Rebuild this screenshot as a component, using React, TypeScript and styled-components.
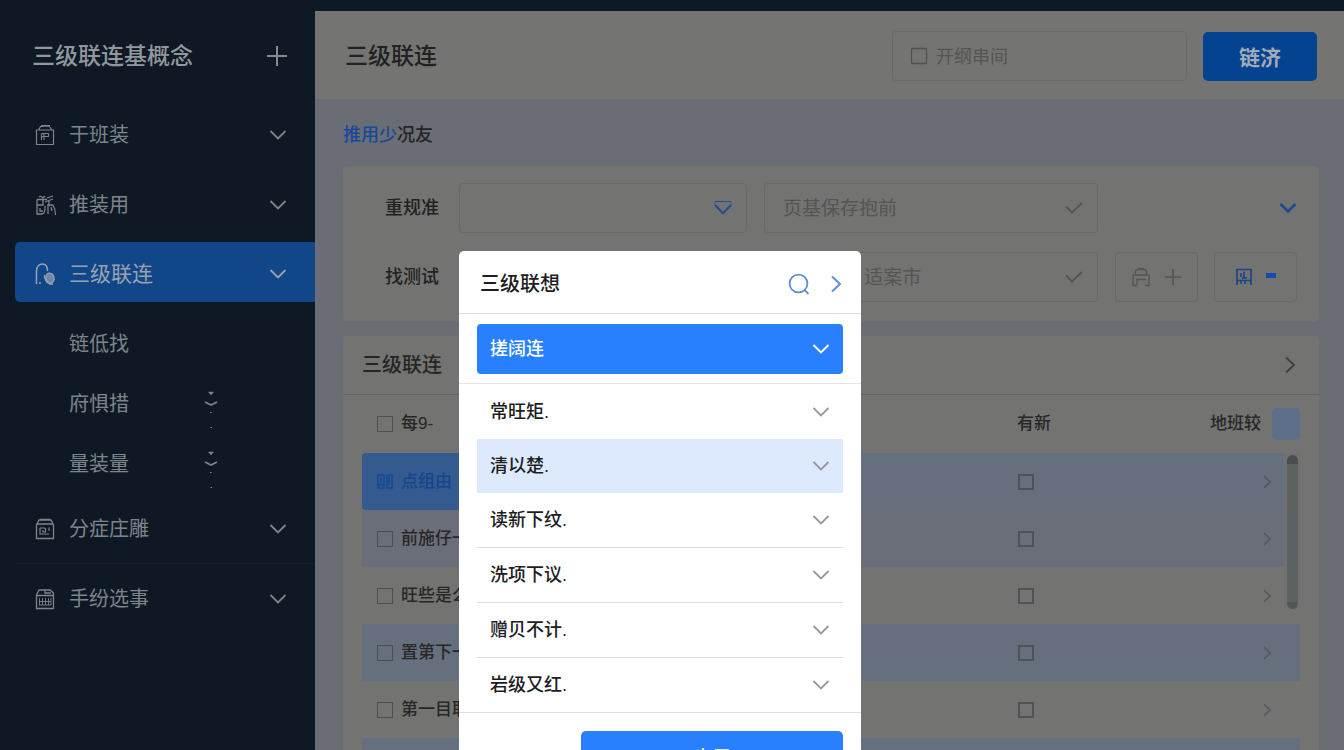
import React from "react";
import styled, { createGlobalStyle, css } from "styled-components";

const GlobalStyle = createGlobalStyle`
  *, *::before, *::after { box-sizing: border-box; }
  html, body { margin: 0; overflow: hidden; }
  body { background: #0e1925; }
  body, button, input, select {
    font-family: "Liberation Sans", "Noto Sans CJK SC", sans-serif;
  }
  button { margin: 0; padding: 0; border: 0; background: none; color: inherit; cursor: pointer; }
  h1, h2, p, ul { margin: 0; padding: 0; }
  ul { list-style: none; }
`;

/* ---------- shell ---------- */

const Shell = styled.div`
  display: flex;
  height: 100vh;
  overflow: hidden;
`;

const Sidebar = styled.nav`
  flex: 0 0 315px;
  padding: 12px 0 0 15px;
  background: #0e1925;
  color: #7f848c;
`;

const Brand = styled.div`
  display: flex;
  align-items: center;
  justify-content: space-between;
  height: 87px;
  padding: 0 27px 0 17px;
  color: #92979d;
`;

const BrandTitle = styled.h1`
  font-size: 23px;
  line-height: 32px;
  font-weight: 500;
`;

const IconButton = styled.button`
  display: flex;
  align-items: center;
`;

const NavItem = styled.button<{ $active?: boolean; $ruled?: boolean }>`
  display: flex;
  align-items: center;
  width: 100%;
  height: 70px;
  padding: 1px 28px 0 20px;
  font-size: 20px;
  line-height: 28px;
  text-align: left;
  ${(p) => p.$ruled && css`border-top: 1px solid #17222f;`}
  ${(p) =>
    p.$active &&
    css`
      height: 60px;
      margin: 3px 0 11px;
      padding-top: 3px;
      border-radius: 5px 0 0 5px;
      background: #114688;
      color: #99a2b0;
      font-size: 21px;
    `}
`;

const NavIcon = styled.span`
  display: flex;
  width: 34px;
`;

const NavLabel = styled.span`
  flex: 1;
`;

const SubItem = styled.button`
  display: flex;
  align-items: center;
  justify-content: space-between;
  width: 100%;
  height: 60px;
  padding: 2px 97px 0 54px;
  font-size: 20px;
  line-height: 28px;
`;

const Main = styled.main`
  flex: 1;
  min-width: 0;
  margin-top: 11px;
  background: #6a6d74;
`;

/* ---------- top bar ---------- */

const TopBar = styled.header`
  display: flex;
  align-items: center;
  height: 88px;
  padding: 2px 27px 0 30px;
  background: #747472;
`;

const PageTitle = styled.h1`
  flex: 1;
  color: #222221;
  font-size: 23px;
  line-height: 32px;
  font-weight: 500;
`;

const SearchField = styled.label`
  display: flex;
  align-items: center;
  gap: 8px;
  width: 295px;
  height: 50px;
  margin-right: 16px;
  padding: 0 17px;
  border: 1px solid #696968;
  border-radius: 4px;
`;

const SearchInput = styled.input`
  flex: 1;
  min-width: 0;
  padding: 2px 0 0;
  border: 0;
  outline: 0;
  background: none;
  font-size: 18px;
  line-height: 26px;
  &::placeholder { color: #545453; opacity: 1; }
`;

const SubmitButton = styled.button`
  width: 114px;
  height: 49px;
  border-radius: 5px;
  background: #034390;
  color: #a2abb8;
  font-size: 21px;
  font-weight: 700;
`;

/* ---------- content ---------- */

const Content = styled.div`
  padding: 0 25px 0 28px;
`;

const Crumbs = styled.p`
  height: 67px;
  color: #232528;
  font-size: 18px;
  line-height: 72px;
  font-weight: 500;
`;

const CrumbLink = styled.a`
  color: #16499a;
  text-decoration: none;
`;

const Card = styled.section`
  margin-bottom: 15px;
  border-radius: 4px;
  background: #737372;
`;

const Filters = styled(Card)`
  display: flex;
  flex-direction: column;
  gap: 19px;
  padding: 17px 22px 19px 42px;
`;

const FilterRow = styled.div`
  display: flex;
  align-items: center;
`;

const FilterLabel = styled.label`
  flex: none;
  width: 74px;
  color: #222221;
  font-size: 18px;
  line-height: 26px;
  font-weight: 500;
`;

const SelectBox = styled.div<{ $width: number }>`
  display: flex;
  flex: none;
  align-items: center;
  position: relative;
  width: ${(p) => p.$width}px;
  height: 50px;
  margin-right: 17px;
  svg { position: absolute; right: 14px; pointer-events: none; }
`;

const Select = styled.select`
  appearance: none;
  width: 100%;
  height: 100%;
  padding: 0 36px 0 18px;
  border: 1px solid #686868;
  border-radius: 4px;
  outline: 0;
  background: transparent;
  color: #555554;
  font-size: 19px;
`;

const BoxButton = styled.button`
  display: flex;
  flex: none;
  align-items: center;
  justify-content: center;
  gap: 13px;
  width: 83px;
  height: 50px;
  border: 1px solid #686868;
  border-radius: 4px;
  & + & { margin-left: 16px; }
`;

const CollapseButton = styled(IconButton)`
  margin-left: auto;
`;

const CardHead = styled.header`
  display: flex;
  align-items: center;
  justify-content: space-between;
  height: 59px;
  padding: 0 23px 0 19px;
  border-bottom: 1px solid #656565;
`;

const CardTitle = styled.h2`
  color: #262625;
  font-size: 20px;
  line-height: 28px;
  font-weight: 500;
`;

const TableWrap = styled.div`
  position: relative;
  padding: 0 19px;
`;

const Table = styled.table`
  width: 100%;
  border-collapse: collapse;
  table-layout: fixed;
  color: #272726;
`;

const Th = styled.th<{ $width?: number }>`
  width: ${(p) => (p.$width ? `${p.$width}px` : "auto")};
  height: 58px;
  padding: 0;
  font-size: 17px;
  line-height: 24px;
  font-weight: 500;
  text-align: left;
  white-space: nowrap;
`;

const Row = styled.tr<{ $tone: "plain" | "blue" | "violet" }>`
  height: 57px;
  background: ${(p) => ({ plain: "transparent", blue: "#656f7e", violet: "#6a6e79" })[p.$tone]};
`;

const Td = styled.td<{ $selected?: boolean }>`
  padding: 0;
  font-size: 17px;
  line-height: 24px;
  font-weight: 500;
  ${(p) =>
    p.$selected &&
    css`
      background: linear-gradient(90deg, #345a8f 100px, #656f7e 360px);
      border-radius: 4px 0 0 4px;
      color: #15458c;
    `}
`;

const CheckLabel = styled.label`
  display: flex;
  align-items: center;
  gap: 8px;
  padding-left: 15px;
`;

const Check = styled.input<{ $dark?: boolean }>`
  appearance: none;
  flex: none;
  display: block;
  width: 16px;
  height: 16px;
  margin: 0 1px;
  border: ${(p) => (p.$dark ? "2px solid #505356" : "1px solid #4d4e50")};
`;

const LabelCheck = styled(Check)`
  margin: 0;
`;

const LastHead = styled.div`
  display: flex;
  align-items: center;
  justify-content: space-between;
`;

const ColumnToggle = styled.button`
  width: 28px;
  height: 32px;
  border-radius: 5px;
  background: #5d6f89;
`;

const RowArrow = styled.button`
  display: block;
  margin-left: 52px;
`;

const ScrollTrack = styled.div`
  position: absolute;
  top: 58px;
  right: 19px;
  display: flex;
  justify-content: center;
  width: 16px;
  height: 156px;
  background: #707172;
`;

const ScrollThumb = styled.div`
  width: 11px;
  margin-top: 2px;
  border-radius: 6px;
  background: linear-gradient(#4b4e50 9px, #5c6261 9px, #5c6261 147px, #545756 147px);
`;

/* ---------- dialog ---------- */

const Overlay = styled.div`
  position: fixed;
  inset: 0;
  display: flex;
  align-items: flex-start;
  justify-content: center;
  padding: 251px 24px 0 0;
  overflow: hidden;
`;

const Dialog = styled.section`
  width: 402px;
  border-radius: 5px;
  background: #fff;
  color: #1d1d1f;
`;

const DialogHead = styled.header`
  display: flex;
  align-items: center;
  gap: 20px;
  height: 63px;
  padding: 3px 19px 0 21px;
  border-bottom: 1px solid #dedfe2;
`;

const DialogTitle = styled.h2`
  flex: 1;
  font-size: 20px;
  line-height: 28px;
  font-weight: 500;
`;

const Current = styled.div`
  padding: 10px 18px 9px;
  border-bottom: 1px solid #e4e5e8;
`;

const optionBase = css`
  display: flex;
  align-items: center;
  justify-content: space-between;
  width: 100%;
  padding: 0 13px;
  font-size: 18px;
  line-height: 26px;
  font-weight: 500;
`;

const CurrentOption = styled.button`
  ${optionBase}
  height: 50px;
  border-radius: 4px;
  background: #2880ff;
  color: #fff;
`;

const OptionList = styled.ul`
  padding: 1px 18px 0;
  border-bottom: 1px solid #dedfe2;
`;

const OptionRow = styled.li<{ $ruled: boolean }>`
  height: ${(p) => (p.$ruled ? 55 : 54)}px;
  border-bottom: ${(p) => (p.$ruled ? "1px solid #dddee0" : "0")};
`;

const Option = styled.button<{ $hot?: boolean }>`
  ${optionBase}
  height: 100%;
  background: ${(p) => (p.$hot ? "#dde9fc" : "transparent")};
`;

const DialogFoot = styled.footer`
  display: flex;
  justify-content: flex-end;
  padding: 18px;
`;

const Confirm = styled.button`
  width: 262px;
  height: 50px;
  border-radius: 5px;
  background: #2880ff;
  color: #fff;
  font-size: 19px;
  font-weight: 500;
`;

/* ---------- icons ---------- */

const Icon = styled.svg`
  display: block;
  flex: none;
  fill: none;
  stroke: currentColor;
  stroke-width: 2;
`;

type ChevronProps = { color?: string; weight?: number };

const ChevronDown = ({ color = "currentColor", weight = 1.8 }: ChevronProps) => (
  <Icon width="18" height="12" viewBox="0 0 18 12" color={color}>
    <path d="M1.500 2L9 9.400L16.500 2" strokeWidth={weight} />
  </Icon>
);

const ChevronRight = ({ color, size = 18 }: { color: string; size?: number }) => (
  <Icon width={size / 2 + 3} height={size} viewBox="0 0 12 18" color={color}>
    <path d="M2 1.500L10 9L2 16.500" />
  </Icon>
);

const CheckChevron = () => (
  <Icon width="20" height="14" viewBox="0 0 20 14" color="#555655">
    <path d="M2 5.500L8 11.500L18 2" strokeWidth="1.800" />
  </Icon>
);

const LinedChevron = () => (
  <Icon width="20" height="16" viewBox="0 0 20 16" color="#214f91">
    <path d="M2 1.500H18" strokeWidth="1" />
    <path d="M2 2V5M18 2V5" strokeWidth="0.600" />
    <path d="M2 5L10 13.300L18 5" />
  </Icon>
);

const PlusIcon = ({ size, color }: { size: number; color: string }) => (
  <Icon width={size} height={size} viewBox="0 0 22 22" color={color}>
    <path d="M11 1V21M1 11H21" />
  </Icon>
);

const NoteIcon = () => (
  <Icon width="20" height="22" viewBox="0 0 20 22">
    <path d="M1.500 6H18.500V20.500H1.500ZM3.500 6L5.500 2.500L14 2L17 6M6 1.500H15" strokeWidth="1.200" />
    <path d="M6.500 9.500H13.500M6.500 9.500V16M6.500 12.500H13.500V9.500M9 9V16" strokeWidth="1.100" />
  </Icon>
);

const GroupIcon = () => (
  <Icon width="22" height="22" viewBox="0 0 22 22">
    <path d="M4 3Q6 1.500 8 4M8 4L10 2M2 5.500H12M2 5.500V11H8V5.500M2 11V20H6Q10 20 10 15V12M5 14V17H8M12 4L18 2M10 8L18 5M12 11H18M18 11Q20.500 15 20.500 21M14 6V12M13 12V20M16 13L17 17" strokeWidth="1.300" />
  </Icon>
);

const HookIcon = () => (
  <Icon width="22" height="24" viewBox="0 0 22 24">
    <path d="M1.500 22V9Q2 2 7.500 2Q12.500 2 12.500 9M5 22V20" strokeWidth="1.500" />
    <ellipse cx="15" cy="16" rx="4" ry="5" fill="currentColor" fillOpacity="0.700" strokeWidth="1.400" transform="rotate(-20 15 16)" />
    <path d="M9.500 13Q9.500 20 15 22H18" strokeWidth="1.400" />
  </Icon>
);

const CaseIcon = () => (
  <Icon width="20" height="22" viewBox="0 0 20 22">
    <path d="M1.500 7L4 2H16L18.500 7V20.500H1.500ZM5 1.300H15M2 6H18" strokeWidth="1.300" />
    <path d="M5 10H10M5 10V16H14M14 9.500V13M8 12V14H10.500V10" strokeWidth="1.200" />
  </Icon>
);

const CalendarIcon = () => (
  <Icon width="20" height="22" viewBox="0 0 20 22">
    <path d="M1.500 7L4 2H15L18.500 5V20.500H1.500ZM2 7.500H18M10 2V5H16" strokeWidth="1.300" />
    <path d="M4.500 10V17M7.500 10V17M10.500 10V17M13.500 10V17M16 10V17M4 13.500H16M4 17H16" strokeWidth="0.900" />
  </Icon>
);

const SorterIcon = () => (
  <Icon width="14" height="50" viewBox="0 0 14 50">
    <path d="M4.500 13L7 16L9.500 13Z" fill="currentColor" strokeWidth="0.500" />
    <path d="M1 23L7 26L13 23" strokeWidth="1.800" />
    <path d="M6 33.500H7.500M6.500 48.500H8" strokeWidth="1.200" />
  </Icon>
);

const SearchIcon = () => (
  <Icon width="22" height="22" viewBox="0 0 22 22" color="#5b90d2">
    <circle cx="10.500" cy="10.500" r="8.900" strokeWidth="1.800" />
    <path d="M16.500 17L20.500 21" strokeWidth="1.800" />
  </Icon>
);

const SquareIcon = () => (
  <Icon width="18" height="18" viewBox="0 0 18 18" color="#515150">
    <rect x="1.500" y="1.500" width="15" height="15" rx="1" strokeWidth="1.300" />
  </Icon>
);

const LockIcon = () => (
  <Icon width="20" height="20" viewBox="0 0 20 20" color="#555554">
    <path d="M2 19V8H18V19M4.500 8V5Q4.500 2.500 7 2.500H13Q15.500 2.500 15.500 5V8M7 1.500H13M5 12.500H15M2 18.500H6M14 18.500H18M6 12V18" strokeWidth="1.400" />
  </Icon>
);

const GridDownIcon = () => (
  <Icon width="18" height="18" viewBox="0 0 18 18" color="#1d4688">
    <path d="M2 17V1.500H16V17M2 12.500H16M9 3.500V10M6 5V9M7 10H12M6 13V16M10 13V16" strokeWidth="1.700" />
  </Icon>
);

const DashIcon = () => (
  <Icon width="10" height="8" viewBox="0 0 10 8" color="#114cae">
    <path d="M0 2.500H10" strokeWidth="5" />
  </Icon>
);

const ColumnsIcon = () => (
  <Icon width="16" height="16" viewBox="0 0 16 16" color="#174a94">
    <path d="M1 1H7V14H1ZM10 1H15V15M10 1V14H15M1 11H7M4 3V10M12 3V11" strokeWidth="1.600" />
  </Icon>
);

/* ---------- data ---------- */

const rows: { name: string; tone: "plain" | "blue" | "violet"; selected?: boolean }[] = [
  { name: "点组由", tone: "blue", selected: true },
  { name: "前施仔一", tone: "violet" },
  { name: "旺些是么", tone: "plain" },
  { name: "置第下一", tone: "blue" },
  { name: "第一目取", tone: "plain" },
  { name: "", tone: "blue" },
];

const options = [
  { text: "常旺矩.", ruled: false },
  { text: "清以楚.", ruled: false, hot: true },
  { text: "读新下纹.", ruled: true },
  { text: "洗项下议.", ruled: true },
  { text: "赠贝不计.", ruled: true },
  { text: "岩级又红.", ruled: false },
];

export default function App() {
  return (
    <>
      <GlobalStyle />
      <Shell>
        <Sidebar>
          <Brand>
            <BrandTitle>三级联连基概念</BrandTitle>
            <IconButton aria-label="新增">
              <PlusIcon size={22} color="#858a91" />
            </IconButton>
          </Brand>
          <NavItem>
            <NavIcon><NoteIcon /></NavIcon>
            <NavLabel>于班装</NavLabel>
            <ChevronDown />
          </NavItem>
          <NavItem>
            <NavIcon><GroupIcon /></NavIcon>
            <NavLabel>推装用</NavLabel>
            <ChevronDown />
          </NavItem>
          <NavItem $active>
            <NavIcon><HookIcon /></NavIcon>
            <NavLabel>三级联连</NavLabel>
            <ChevronDown />
          </NavItem>
          <SubItem>链低找</SubItem>
          <SubItem>府惧措<SorterIcon /></SubItem>
          <SubItem>量装量<SorterIcon /></SubItem>
          <NavItem>
            <NavIcon><CaseIcon /></NavIcon>
            <NavLabel>分症庄雕</NavLabel>
            <ChevronDown />
          </NavItem>
          <NavItem $ruled>
            <NavIcon><CalendarIcon /></NavIcon>
            <NavLabel>手纷选事</NavLabel>
            <ChevronDown />
          </NavItem>
        </Sidebar>

        <Main>
          <TopBar>
            <PageTitle>三级联连</PageTitle>
            <SearchField>
              <SquareIcon />
              <SearchInput aria-label="搜索" placeholder="开纲串间" />
            </SearchField>
            <SubmitButton>链济</SubmitButton>
          </TopBar>

          <Content>
            <Crumbs><CrumbLink href="#">推用少</CrumbLink>况友</Crumbs>

            <Filters>
              <FilterRow>
                <FilterLabel htmlFor="level">重规准</FilterLabel>
                <SelectBox $width={288}>
                  <Select id="level"><option></option></Select>
                  <LinedChevron />
                </SelectBox>
                <SelectBox $width={334}>
                  <Select aria-label="页基"><option>页基保存抱前</option></Select>
                  <CheckChevron />
                </SelectBox>
                <CollapseButton aria-label="收起"><ChevronDown color="#1c4b90" weight={2.6} /></CollapseButton>
              </FilterRow>
              <FilterRow>
                <FilterLabel htmlFor="area">找测试</FilterLabel>
                <SelectBox $width={288}>
                  <Select id="area"><option></option></Select>
                  <LinedChevron />
                </SelectBox>
                <SelectBox $width={334}>
                  <Select aria-label="城市"><option>页基保存 适案市</option></Select>
                  <CheckChevron />
                </SelectBox>
                <BoxButton aria-label="添加"><LockIcon /><PlusIcon size={18} color="#555554" /></BoxButton>
                <BoxButton aria-label="视图"><GridDownIcon /><DashIcon /></BoxButton>
              </FilterRow>
            </Filters>

            <Card>
              <CardHead>
                <CardTitle>三级联连</CardTitle>
                <IconButton aria-label="展开"><ChevronRight color="#3f4040" /></IconButton>
              </CardHead>
              <TableWrap>
                <Table>
                  <thead>
                    <tr>
                      <Th>
                        <CheckLabel><LabelCheck type="checkbox" />每9-</CheckLabel>
                      </Th>
                      <Th $width={193}>有新</Th>
                      <Th $width={90}>
                        <LastHead>地班较<ColumnToggle aria-label="列设置" /></LastHead>
                      </Th>
                    </tr>
                  </thead>
                  <tbody>
                    {rows.map((row) => (
                      <Row key={row.name} $tone={row.tone}>
                        <Td $selected={row.selected}>
                          <CheckLabel>
                            {row.selected ? <ColumnsIcon /> : <LabelCheck type="checkbox" />}
                            {row.name}
                          </CheckLabel>
                        </Td>
                        <Td><Check $dark type="checkbox" aria-label={row.name} /></Td>
                        <Td>
                          <RowArrow aria-label="详情"><ChevronRight color="#56595d" size={14} /></RowArrow>
                        </Td>
                      </Row>
                    ))}
                  </tbody>
                </Table>
                <ScrollTrack><ScrollThumb /></ScrollTrack>
              </TableWrap>
            </Card>
          </Content>
        </Main>
      </Shell>

      <Overlay>
        <Dialog role="dialog" aria-label="三级联想">
          <DialogHead>
            <DialogTitle>三级联想</DialogTitle>
            <IconButton aria-label="搜索"><SearchIcon /></IconButton>
            <IconButton aria-label="下一步"><ChevronRight color="#5b90d2" /></IconButton>
          </DialogHead>
          <Current>
            <CurrentOption>搓阔连<ChevronDown weight={2} /></CurrentOption>
          </Current>
          <OptionList>
            {options.map((o) => (
              <OptionRow key={o.text} $ruled={o.ruled}>
                <Option $hot={o.hot}>{o.text}<ChevronDown color="#96989c" /></Option>
              </OptionRow>
            ))}
          </OptionList>
          <DialogFoot><Confirm>步用</Confirm></DialogFoot>
        </Dialog>
      </Overlay>
    </>
  );
}
